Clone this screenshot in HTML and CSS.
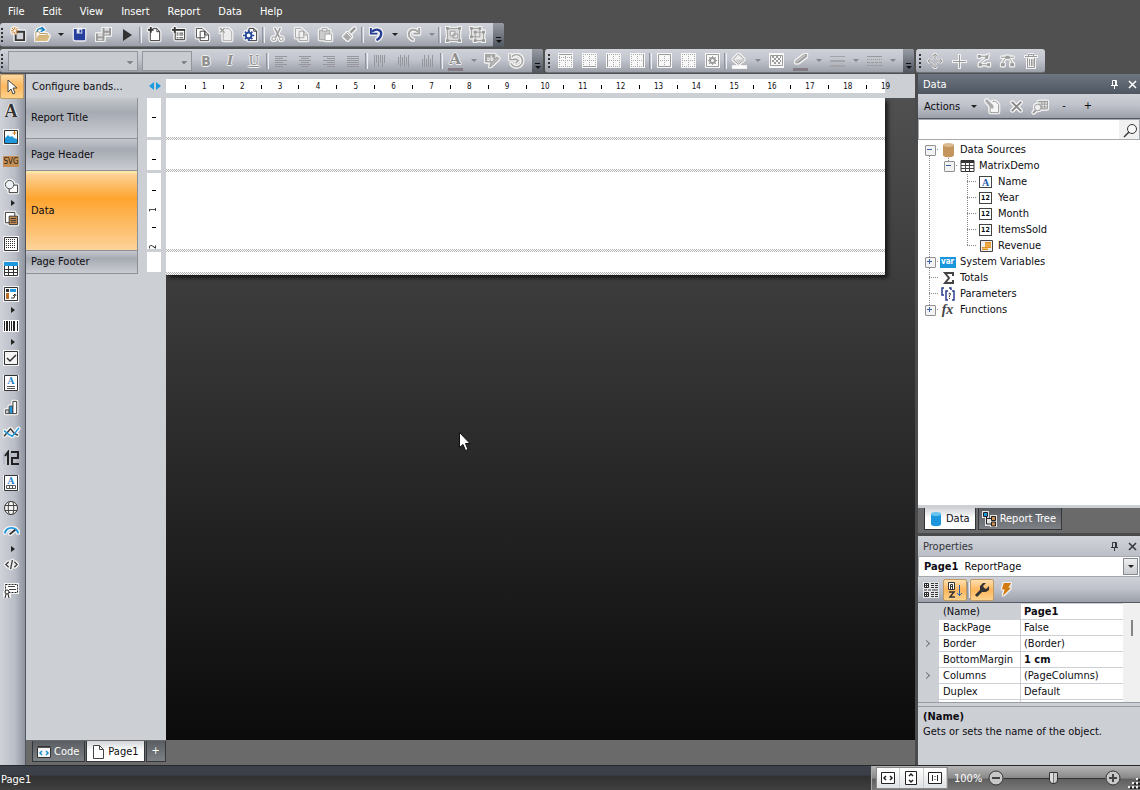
FILE: index.html
```html
<!DOCTYPE html>
<html lang="en">
<head>
<meta charset="utf-8">
<title>Report Designer</title>
<link rel="stylesheet" href="styles.css">
</head>
<body>
<div class="app">
  <nav class="menu">
    <button>File</button><button>Edit</button><button>View</button><button>Insert</button><button>Report</button><button>Data</button><button>Help</button>
  </nav>

  <div class="toolbar-row">
    <div class="toolbar first" role="toolbar" aria-label="Standard">
      <button class="tb" aria-label="New"><svg class="halo" viewBox="0 0 16 16"><path d="M6 5h8v9H5V8" fill="#d0d2d7" stroke="#333" stroke-width="2"/><path d="M4 0v8M0 4h8M1 1l6 6M7 1L1 7" stroke="#d07818" fill="none"/><circle cx="4" cy="4" r="1.3" fill="#fff"/></svg></button>
      <button class="tb" aria-label="Open"><svg class="halo" viewBox="0 0 16 16"><path d="M1 5h3l1 2h8v2H4l-3 6z" fill="#fff" stroke="#b99a60"/><path d="M4 9h12l-3 6H1z" fill="#d9ba7c"/><path d="M2 5c1-4 4-4 7-2M7 0l3 3-4 2" fill="none" stroke="#1781c4" stroke-width="1.5"/></svg></button>
      <button class="caret" aria-label="Open recent"></button>
      <button class="tb" aria-label="Save"><svg class="halo" viewBox="0 0 16 16"><path d="M2 2h12v12H3l-1-1z" fill="#263f9c"/><path d="M5 2h6v5H5z" fill="#dfe3ef"/><path d="M8 3h2v3H8z" fill="#263f9c"/></svg></button>
      <button class="tb" aria-label="Save all" disabled><svg class="halo" viewBox="0 0 16 16"><path d="M7 1h9v8H7zM0 7h9v8H0z" fill="#999"/><path d="M9 1h5v3H9zM2 7h5v3H2zM9 6h5v2H9zM2 12h5v2H2z" fill="#ddd"/></svg></button>
      <button class="tb" aria-label="Preview"><svg viewBox="0 0 16 16"><path d="M4 2l9 6-9 6z" fill="#333"/></svg></button>
      <span class="sep"></span>
      <button class="tb" aria-label="New page"><svg class="halo" viewBox="0 0 16 16"><path d="M3.500 6v8.500h10V5l-3-3.500H6" fill="#fff" stroke="#333"/><path d="M10.500 2v3h3" fill="none" stroke="#333"/><path d="M4 0v6M1 3h6" fill="none" stroke="#333" stroke-width="2"/></svg></button>
      <button class="tb" aria-label="New dialog"><svg class="halo" viewBox="0 0 16 16"><path d="M4.500 5v8.500h10V3H6" fill="#fff" stroke="#333"/><path d="M7 3h8M4 0v6M1 3h6" stroke="#333" stroke-width="2"/><path d="M6 6.500h2m1 0h4M6 8.500h2m1 0h4M6 11.500h2m1 0h4" stroke="#333"/></svg></button>
      <button class="tb" aria-label="Copy page"><svg class="halo" viewBox="0 0 16 16"><path d="M1.500 1.500h6l3 3v7h-9zM5.500 4.500h5l4 4v6h-9z" fill="#fff" stroke="#444"/><path d="M10.500 4.500v4h4" fill="none" stroke="#444"/></svg></button>
      <button class="tb" aria-label="Delete page" disabled><svg class="halo" viewBox="0 0 16 16"><path d="M4.500 5v9.500h9V5l-3-3.500H7" fill="#ececec" stroke="#aaa"/><path d="M1 1l5 5M6 1L1 6" stroke="#999" stroke-width="1.5"/></svg></button>
      <button class="tb" aria-label="Page settings"><svg class="halo" viewBox="0 0 16 16"><path d="M6.500 1.500h5l3 3v10h-8z" fill="#fff" stroke="#333"/><path d="M11.500 1.500v3h3" fill="none" stroke="#333"/><circle cx="6" cy="9" r="3" fill="#fff" stroke="#2a4a9e" stroke-width="2"/><path d="M6 3v3M6 12v3M0 9h3M9 9h3M2 5l2 2M8 11l2 2M10 5L8 7M4 11l-2 2" stroke="#2a4a9e" stroke-width="1.700"/></svg></button>
      <span class="sep"></span>
      <button class="tb" aria-label="Cut" disabled><svg class="halo" viewBox="0 0 16 16"><path d="M5 1l5 10M11 1L6 11" stroke="#999" stroke-width="1.500"/><circle cx="4" cy="12.500" r="2" fill="none" stroke="#999"/><circle cx="12" cy="12.500" r="2" fill="none" stroke="#999"/></svg></button>
      <button class="tb" aria-label="Copy" disabled><svg class="halo" viewBox="0 0 16 16"><path d="M1.500 1.500h6l3 3v7h-9zM5.500 4.500h5l4 4v6h-9z" fill="#f0f0f0" stroke="#a2a2a2"/><path d="M10.500 4.500v4h4" fill="none" stroke="#a2a2a2"/></svg></button>
      <button class="tb" aria-label="Paste" disabled><svg class="halo" viewBox="0 0 16 16"><path d="M1.500 3.500h11v10h-11z" fill="#ccc" stroke="#a2a2a2"/><path d="M4.500 1.500h5v3h-5z" fill="#eee" stroke="#a2a2a2"/><path d="M7.500 7.500h7v7h-7z" fill="#fff" stroke="#a2a2a2"/></svg></button>
      <button class="tb" aria-label="Format painter" disabled><svg class="halo" viewBox="0 0 16 16"><path d="M14 1l-5 5" stroke="#999" stroke-width="2.500"/><path d="M6 5l5 5-5 5-5-5z" fill="#aaa"/><path d="M5 6l5 5" stroke="#fff"/></svg></button>
      <span class="sep"></span>
      <button class="tb" aria-label="Undo"><svg class="halo" viewBox="0 0 16 16"><path d="M3 5c5-4 10-2 10 2 0 4-3 6-5 7" fill="none" stroke="#233e94" stroke-width="2.500"/><path d="M1 1h2v5h6v2H1z" fill="#233e94"/></svg></button>
      <button class="caret" aria-label="Undo list"></button>
      <button class="tb" aria-label="Redo" disabled><svg class="halo" viewBox="0 0 16 16"><path d="M13 5C8 1 3 3 3 8c0 3 3 5 5 6" fill="none" stroke="#a3a3a3" stroke-width="2"/><path d="M15 1h-2v5H8v2h7z" fill="#a3a3a3"/></svg></button>
      <button class="caret" aria-label="Redo list" disabled></button>
      <span class="sep"></span>
      <button class="tb" aria-label="Group" disabled><svg class="halo" viewBox="0 0 16 16"><path d="M1.500 1.500h13v13h-13z" fill="#d8d8da" stroke="#999"/><path d="M4.500 4.500h5v5h-5zM7.500 7.500h5v4h-5z" fill="#eee" stroke="#999"/><path d="M0 0h3v3H0zM13 0h3v3h-3zM0 13h3v3H0zM13 13h3v3h-3z" fill="#999"/></svg></button>
      <button class="tb" aria-label="Ungroup" disabled><svg class="halo" viewBox="0 0 16 16"><path d="M1.500 1.500h9v9h-9zM5.500 5.500h9v9h-9z" fill="#e4e4e4" stroke="#999"/><path d="M0 0h3v3H0zM9 0h3v3H9zM0 9h3v3H0zM4 4h3v3H4zM13 4h3v3h-3zM4 13h3v3H4zM13 13h3v3h-3z" fill="#999"/></svg></button>
      <button class="overflow" aria-label="More"></button>
    </div>
  </div>

  <div class="toolbar-row">
    <div class="toolbar first" role="toolbar" aria-label="Text">
      <select class="font-name" aria-label="Font" disabled><option></option></select>
      <select class="font-size" aria-label="Size" disabled><option></option></select>
      <button class="tb letter bold" disabled>B</button>
      <button class="tb letter italic" disabled>I</button>
      <button class="tb letter under" disabled>U</button>
      <span class="sep"></span>
      <button class="tb" aria-label="Left" disabled><svg viewBox="0 0 16 16"><path d="M2 3.500h12M2 5.500h8M2 7.500h12M2 9.500h8M2 11.500h12M2 13.500h8" stroke="#95979c"/></svg></button>
      <button class="tb" aria-label="Center" disabled><svg viewBox="0 0 16 16"><path d="M2 3.500h12M4 5.500h8M2 7.500h12M4 9.500h8M2 11.500h12M4 13.500h8" stroke="#95979c"/></svg></button>
      <button class="tb" aria-label="Right" disabled><svg viewBox="0 0 16 16"><path d="M2 3.500h12M6 5.500h8M2 7.500h12M6 9.500h8M2 11.500h12M6 13.500h8" stroke="#95979c"/></svg></button>
      <button class="tb" aria-label="Justify" disabled><svg viewBox="0 0 16 16"><path d="M2 3.500h12M2 5.500h12M2 7.500h12M2 9.500h12M2 11.500h12M2 13.500h12" stroke="#95979c"/></svg></button>
      <span class="sep"></span>
      <button class="tb" aria-label="Top" disabled><svg viewBox="0 0 16 16"><path d="M2.500 2v12M4.500 2v8M6.500 2v12M8.500 2v8M10.500 2v12M12.500 2v8" stroke="#95979c"/></svg></button>
      <button class="tb" aria-label="Middle" disabled><svg viewBox="0 0 16 16"><path d="M2.500 4v8M4.500 2v12M6.500 4v8M8.500 2v12M10.500 4v8M12.500 2v12" stroke="#95979c"/></svg></button>
      <button class="tb" aria-label="Bottom" disabled><svg viewBox="0 0 16 16"><path d="M2.500 6v8M4.500 2v12M6.500 6v8M8.500 2v12M10.500 6v8M12.500 2v12" stroke="#95979c"/></svg></button>
      <span class="sep"></span>
      <button class="tb letter color" disabled>A</button>
      <button class="caret" aria-label="Text colors" disabled></button>
      <button class="tb" aria-label="Highlight" disabled><svg class="halo" viewBox="0 0 16 16"><path d="M0 1h11v9H0z" fill="#a5a5a5"/><path d="M2 5.500h2.500V8H2.500V7M6.500 2.500V8h2V5.500h-2" fill="none" stroke="#fff"/><path d="M15 6l-7 7-3 2 1-4 7-7z" fill="#bbb" stroke="#999"/></svg></button>
      <button class="tb" aria-label="Rotation" disabled><svg class="halo" viewBox="0 0 16 16"><path d="M3 4a6.500 6.500 0 1 1-1 7" fill="none" stroke="#a2a2a2" stroke-width="1.500"/><path d="M1 1v6h6M6 6l4 2-3 3" fill="none" stroke="#a2a2a2" stroke-width="1.500"/></svg></button>
      <button class="overflow" aria-label="More"></button>
    </div>
    <div class="toolbar" role="toolbar" aria-label="Border and fill">
      <button class="tb" aria-label="Top line" disabled><svg class="cells" viewBox="0 0 15 15"><path class="d" d="M1 4.500h14M1 7.500h14M1 13.500h14M1.500 3v12M7.500 3v12M13.500 3v12"/><path d="M1 1.500h13"/></svg></button>
      <button class="tb" aria-label="Bottom line" disabled><svg class="cells" viewBox="0 0 15 15"><path class="d" d="M1 1.500h14M1 7.500h14M1.500 1v12M7.500 1v12M13.500 1v12"/><path d="M1 13.500h13"/></svg></button>
      <button class="tb" aria-label="Left line" disabled><svg class="cells" viewBox="0 0 15 15"><path class="d" d="M3 1.500h12M3 7.500h12M3 13.500h12M7.500 1v14M13.500 1v14"/><path d="M1.500 1v13"/></svg></button>
      <button class="tb" aria-label="Right line" disabled><svg class="cells" viewBox="0 0 15 15"><path class="d" d="M1 1.500h12M1 7.500h12M1 13.500h12M7.500 1v14M1.500 1v14"/><path d="M13.500 1v13"/></svg></button>
      <span class="sep"></span>
      <button class="tb" aria-label="All lines" disabled><svg class="cells" viewBox="0 0 15 15"><path class="d" d="M3 7.500h10M7.500 3v10"/><path d="M1.500 1.500h12v12h-12z"/></svg></button>
      <button class="tb" aria-label="No lines" disabled><svg class="cells" viewBox="0 0 15 15"><path class="d" d="M1 1.500h14M1 7.500h14M1 13.500h14M1.500 1v14M7.500 1v14M13.500 1v14"/></svg></button>
      <button class="tb" aria-label="Border editor" disabled><svg class="cells" viewBox="0 0 15 15"><path d="M1.500 1.500h12v12h-12z"/><circle cx="7.500" cy="7.500" r="2.500" stroke-width="2"/><path d="M7.500 3v2M7.500 10v2M3 7.500h2M10 7.500h2M4 4l2 2M9 9l2 2M11 4L9 6M6 9l-2 2"/></svg></button>
      <span class="sep"></span>
      <button class="tb" aria-label="Fill" disabled><svg class="halo" viewBox="0 0 16 16"><path d="M7 1l6 6-6 5-6-5z" fill="#eee" stroke="#999"/><path d="M3 7h9l-5 4z" fill="#ccc"/><path d="M1 14h14v2H1z" fill="#fff"/></svg></button>
      <button class="caret" aria-label="Fill colors" disabled></button>
      <button class="tb" aria-label="Fill style" disabled><svg class="cells" viewBox="0 0 15 15"><path d="M1.500 2.500h12v10h-12z"/><path class="d2" d="M3 4h9M5 6h8M3 8h9M5 10h8"/></svg></button>
      <button class="tb" aria-label="Line color" disabled><svg class="halo" viewBox="0 0 16 16"><path d="M15 1v3l-9 7H2l1-3 9-7z" fill="#a3a3a3"/><path d="M4 9l9-7" stroke="#ddd"/></svg><span class="swatch"></span></button>
      <button class="caret" aria-label="Line colors" disabled></button>
      <button class="tb" aria-label="Line width" disabled><svg viewBox="0 0 16 16"><path d="M1 3.500h15" stroke="#a3a4a8"/><path d="M1 8h15M1 13h15" stroke="#a3a4a8" stroke-width="2"/></svg></button>
      <button class="caret" aria-label="Line widths" disabled></button>
      <button class="tb" aria-label="Line style" disabled><svg viewBox="0 0 16 16"><path d="M1 3.500h15" stroke="#999"/><path d="M1 6.500h15" stroke="#999" stroke-dasharray="1 1"/><path d="M1 9.500h15M1 12.500h15" stroke="#999" stroke-dasharray="3 1"/></svg></button>
      <button class="caret" aria-label="Line styles" disabled></button>
      <button class="overflow" aria-label="More"></button>
    </div>
    <div class="toolbar last" role="toolbar" aria-label="Polygon">
      <button class="tb" aria-label="Move" disabled><svg viewBox="0 0 16 16"><g id="arrows" fill="none" stroke="#e4e4e4" stroke-width="3"><path d="M8 2v4M8 10v4M2 8h4M10 8h4M6 3l2-2 2 2M6 13l2 2 2-2M3 6L1 8l2 2M13 6l2 2-2 2"/></g><path d="M8 1v5M8 10v5M1 8h5M10 8h5M6 3l2-2 2 2M6 13l2 2 2-2M3 6L1 8l2 2M13 6l2 2-2 2" fill="none" stroke="#999"/></svg></button>
      <button class="tb" aria-label="Add point" disabled><svg viewBox="0 0 16 16"><path d="M8.500 1v15M1 8.500h15" stroke="#f2f2f2" stroke-width="3"/><path d="M8.500 2v13M2 8.500h13" stroke="#999"/></svg></button>
      <button class="tb" aria-label="Line" disabled><svg class="halo" viewBox="0 0 16 16"><path d="M3 3.500h8l3-2M4 11l7-6M5 12.500h8" fill="none" stroke="#999"/><path d="M2 2h3v3H2zM10 3h3v3h-3zM3 11h3v3H3zM12 11h3v3h-3z" fill="#999"/></svg></button>
      <button class="tb" aria-label="Curve" disabled><svg class="halo" viewBox="0 0 16 16"><path d="M1 4.500h14M3 12c0-5 4-7 5-7s5 2 5 7" fill="none" stroke="#999"/><path d="M6 3h4v3H6zM1 11h4v3H1zM11 11h4v3h-4z" fill="#999"/></svg></button>
      <button class="tb" aria-label="Delete" disabled><svg viewBox="0 0 16 16"><path d="M1 2h4V0h6v2h4v3h-2v11H3V5H1z" fill="#f2f2f2"/><path d="M2 3.500h12M5.500 3V1.500h5V3M4.500 5v9.500h7V5M6.500 6v7M8.500 6v7M10 6v7" fill="none" stroke="#999"/></svg></button>
    </div>
  </div>

  <div class="main">
    <div class="rail" role="toolbar" aria-label="Objects">
      <button class="active" aria-label="Select"><svg viewBox="0 0 16 16"><path d="M4 1v12l3-3 2 5 2-1-2-5h4z" fill="#fff" stroke="#444"/></svg></button>
      <button class="serif">A</button>
      <button aria-label="Picture"><svg class="box" viewBox="0 0 16 16"><path d="M1.500 1.500h13v13h-13z" fill="#fff" stroke="#333"/><path d="M2 9l3-3 2 2 2-1 2 2 3 1v4H2z" fill="#1f97dc"/><path d="M11.500 2v4M9.500 4h4" stroke="#d07818"/></svg></button>
      <button class="svg-tag"><span>SVG</span></button>
      <button aria-label="Shape"><svg class="halo" viewBox="0 0 16 16"><path d="M5.500 6.500h9v8h-9z" fill="#fff" stroke="#333"/><circle cx="6" cy="6" r="4.500" fill="#eef1f5" stroke="#444"/></svg></button>
      <button class="more" aria-label="More shapes"></button>
      <button aria-label="Subreport"><svg class="halo" viewBox="0 0 16 16"><path d="M1.500 1.500h10v11h-10z" fill="#fff" stroke="#333"/><path d="M5.500 5.500h9v9h-9z" fill="#c98e50" stroke="#333"/><path d="M7 8h6M7 10h6M7 12h6" stroke="#333"/></svg></button>
      <button aria-label="Table"><svg class="box" viewBox="0 0 16 16"><path d="M1.500 1.500h13v13h-13z" fill="#fff" stroke="#333"/><path d="M3 3.500h10M3 5.500h10M3 7.500h10M3 9.500h10M3 11.500h10" stroke="#333" stroke-dasharray="1 1"/></svg></button>
      <button aria-label="Matrix"><svg class="box" viewBox="0 0 16 16"><path d="M1.500 3.500h13v11h-13z" fill="#fff" stroke="#333"/><path d="M1 1h14v4H1z" fill="#1f97dc"/><path d="M1 8.500h14M1 11.500h14M5.500 5v10M10.500 5v10" stroke="#333"/></svg></button>
      <button aria-label="Advanced matrix"><svg class="box" viewBox="0 0 16 16"><path d="M1.500 1.500h13v13h-13z" fill="#fff" stroke="#333"/><path d="M3 3h3v3H3z" fill="#333"/><path d="M7 3h6v3H7z" fill="#1f97dc"/><path d="M3 7h3v6H3z" fill="#b86f24"/><path d="M8 12h3l1-3M10 10l2-2 1 2" fill="none" stroke="#333"/></svg></button>
      <button class="more" aria-label="More matrices"></button>
      <button aria-label="Barcode"><svg viewBox="0 0 16 16"><path d="M0 2h16v12H0z" fill="#fff"/><path d="M1.500 3v10M6.500 3v10M8.500 3v10M14.500 3v10" stroke="#222"/><path d="M4 3v10M11 3v10" stroke="#222" stroke-width="2"/></svg></button>
      <button class="more" aria-label="More barcodes"></button>
      <button aria-label="Check box"><svg class="box" viewBox="0 0 16 16"><path d="M1.500 1.500h13v13h-13z" fill="#f4f4f4" stroke="#333"/><path d="M4 8l3 3 6-6" fill="none" stroke="#333" stroke-width="1.500"/></svg></button>
      <button aria-label="Rich text"><svg class="box" viewBox="0 0 16 16"><path d="M1.500 .500h13v15h-13z" fill="#fff" stroke="#333"/><path d="M4 11.500h8M4 13.500h8" stroke="#555"/><text x="8" y="9" text-anchor="middle" class="blue-a">A</text></svg></button>
      <button aria-label="Chart"><svg class="halo" viewBox="0 0 16 16"><path d="M1.500 10.500h4v4h-4z" fill="#ccc" stroke="#444"/><path d="M5.500 6.500h4v8h-4z" fill="#1f97dc" stroke="#444"/><path d="M9.500 1.500h4v13h-4z" fill="#fff" stroke="#333"/></svg></button>
      <button aria-label="Sparkline"><svg class="halo" viewBox="0 0 16 16"><path d="M0 12l7-8 4 5 4 2" fill="none" stroke="#333" stroke-width="1.500"/><path d="M0 6l5 4 4 2 7-9" fill="none" stroke="#1f97dc" stroke-width="1.500"/></svg></button>
      <button class="digits" aria-label="Digits"><svg viewBox="0 0 16 16"><path d="M1 2v12M8 3v5M15 9v5" stroke="#a8adb8" fill="none"/><path d="M2 6l3-4v13M8 2h7v6H9v6h7" fill="none" stroke="#222" stroke-width="2"/></svg></button>
      <button aria-label="Cellular text"><svg class="box" viewBox="0 0 16 16"><path d="M1.500 .500h13v15h-13z" fill="#fff" stroke="#333"/><path d="M3.500 10.500h9v3h-9zM6.500 10v4M9.500 10v4" fill="none" stroke="#555"/><text x="8" y="9" text-anchor="middle" class="blue-a">A</text></svg></button>
      <button aria-label="Map"><svg viewBox="0 0 16 16"><circle cx="8" cy="8" r="6.500" fill="#f5f5f5" stroke="#333"/><path d="M2 5.500h12M2 10.500h12M6 2c-1 4-1 8 0 12M10 2c1 4 1 8 0 12" fill="none" stroke="#444"/></svg></button>
      <button aria-label="Gauge"><svg class="halo" viewBox="0 0 16 16"><path d="M1 9a7 6 0 0 1 14 0" fill="none" stroke="#1f97dc" stroke-width="2"/><path d="M6 10l6-5" stroke="#333" stroke-width="2"/></svg></button>
      <button class="more" aria-label="More gauges"></button>
      <button aria-label="HTML"><svg class="halo" viewBox="0 0 16 16"><path d="M5 5L2 8l3 3M11 5l3 3-3 3M9 3L7 13" fill="none" stroke="#444" stroke-width="1.500"/></svg></button>
      <button aria-label="Signature"><svg viewBox="0 0 16 16"><path d="M1 1h15v11H8v4H0V9h1z" fill="#f4f4f4"/><path d="M2.500 2.500h12v8h-12z" fill="#fff" stroke="#222" stroke-dasharray="2 1"/><path d="M5 4.500h7M6 7.500h7" stroke="#444"/><circle cx="4" cy="10" r="2" fill="#fff" stroke="#222"/><path d="M3 12l-1 4M5 12l1 4" stroke="#222"/></svg></button>
    </div>

    <div class="designer">
      <div class="ruler-row">
        <button class="configure">Configure bands...</button>
        <svg class="split-arrows" viewBox="0 0 12 8"><path d="M5 0v8L0 4zM7 0v8l5-4z" fill="#1a9be0"/></svg>
        <div class="h-ruler"><div class="marks">
          <i></i><b>1</b><i></i><b>2</b><i></i><b>3</b><i></i><b>4</b><i></i><b>5</b><i></i><b>6</b><i></i><b>7</b><i></i><b>8</b><i></i><b>9</b><i></i><b>10</b><i></i><b>11</b><i></i><b>12</b><i></i><b>13</b><i></i><b>14</b><i></i><b>15</b><i></i><b>16</b><i></i><b>17</b><i></i><b>18</b><i></i><b>19</b>
        </div></div>
      </div>
      <div class="work">
        <div class="bands">
          <button class="band title">Report Title</button>
          <button class="band header">Page Header</button>
          <button class="band data">Data</button>
          <button class="band footer">Page Footer</button>
        </div>
        <div class="v-ruler">
          <div class="seg title"><i></i></div>
          <div class="seg header"><i></i></div>
          <div class="seg data"><i></i><b>1</b><i></i><b>2</b></div>
          <div class="seg footer"></div>
        </div>
        <div class="canvas">
          <div class="paper">
            <div class="strip title"></div><div class="strip header"></div><div class="strip data"></div><div class="strip footer"></div>
          </div>
          <svg class="pointer" viewBox="0 0 12 19"><path d="M.500 .500v15l3.500-3 2.500 6 2.500-1-2.500-6H11z" fill="#fff" stroke="#111"/></svg>
        </div>
      </div>
      <div class="page-tabs">
        <button class="tab"><svg viewBox="0 0 16 16"><path d="M1.500 2.500h13v11h-13z" fill="#f4f4f4" stroke="#333"/><path d="M1 3.500h14" stroke="#555"/><path d="M6 7L4 9l2 2M10 7l2 2-2 2" fill="none" stroke="#1a8fd0" stroke-width="1.500"/></svg>Code</button>
        <button class="tab current"><svg viewBox="0 0 16 16"><path d="M3.500 1.500h6l4 4v9h-10z" fill="#fff" stroke="#444"/><path d="M9.500 1.500v4h4" fill="none" stroke="#444"/></svg>Page1</button>
        <button class="tab add">+</button>
      </div>
    </div>

    <aside class="side">
      <section class="data-panel">
        <header class="caption dark"><span>Data</span>
          <button aria-label="Pin"><svg viewBox="0 0 9 9"><path d="M2.500 5V.500h4V5M5.500 1v4M1 5.500h7M4.500 6v3" fill="none" stroke="currentColor"/></svg></button>
          <button aria-label="Close"><svg viewBox="0 0 9 9"><path d="M1 1l7 7M8 1L1 8" stroke="currentColor" stroke-width="1.500"/></svg></button>
        </header>
        <div class="panel-tools">
          <button class="actions">Actions</button><button class="caret" aria-label="Actions list"></button>
          <button class="tb" aria-label="Edit" disabled><svg class="halo" viewBox="0 0 16 16"><path d="M5.500 5v9.500h9V6l-3-3.500H8" fill="#f6f6f6" stroke="#999"/><path d="M0 2l2-2 7 7v3H7z" fill="#aaa"/></svg></button>
          <button class="tb" aria-label="Delete" disabled><svg class="halo" viewBox="0 0 16 16"><path d="M3 3l10 10M13 3L3 13" stroke="#888" stroke-width="2"/></svg></button>
          <button class="tb" aria-label="View data" disabled><svg class="halo" viewBox="0 0 16 16"><path d="M5.500 2.500h10v8H8" fill="#eee" stroke="#999"/><path d="M5 3h11M6 5.500h10M8 8.500h8M9.500 3v8M12.500 3v8" stroke="#999"/><circle cx="5" cy="9" r="3.500" fill="#eee" stroke="#999"/><path d="M3 12l-3 3" stroke="#999" stroke-width="2"/></svg></button>
          <button class="tb">-</button><button class="tb">+</button>
        </div>
        <div class="search"><input type="text" aria-label="Search"><button aria-label="Find"><svg viewBox="0 0 16 16"><circle cx="10" cy="6" r="4.500" fill="#f8f8f8" stroke="#333"/><path d="M7 9l-5 5" stroke="#333" stroke-width="1.500"/></svg></button></div>
        <div class="tree" role="tree">
          <div class="row"><span class="g open first-row"></span><span class="ic"><svg viewBox="0 0 16 16"><path d="M3 3v10c0 3 11 3 11 0V3z" fill="#c4955d"/><ellipse cx="8.500" cy="3" rx="5.500" ry="2" fill="#dab98e"/></svg></span><span>Data Sources</span></div>
          <div class="row"><span class="g v"></span><span class="g open single"></span><span class="ic"><svg viewBox="0 0 16 16"><path d="M2 2.500h13v11H2z" fill="#fff" stroke="#333"/><path d="M2 3.500h13" stroke="#333" stroke-width="3"/><path d="M2 7.500h13M2 10.500h13M6.500 4v9M10.500 4v9" stroke="#444"/></svg></span><span>MatrixDemo</span></div>
          <div class="row"><span class="g v"></span><span class="g"></span><span class="g t"></span><span class="ic"><span class="type letter-a">A</span></span><span>Name</span></div>
          <div class="row"><span class="g v"></span><span class="g"></span><span class="g t"></span><span class="ic"><span class="type">12</span></span><span>Year</span></div>
          <div class="row"><span class="g v"></span><span class="g"></span><span class="g t"></span><span class="ic"><span class="type">12</span></span><span>Month</span></div>
          <div class="row"><span class="g v"></span><span class="g"></span><span class="g t"></span><span class="ic"><span class="type">12</span></span><span>ItemsSold</span></div>
          <div class="row"><span class="g v"></span><span class="g"></span><span class="g l"></span><span class="ic"><svg viewBox="0 0 16 16"><path d="M2.500 2.500h12v11h-12z" fill="#eee" stroke="#444"/><path d="M7 4h6v6h-3v2H4V9h3z" fill="#e08f20"/><path d="M7 6h6M7 8h6M4 10.500h6" stroke="#f5c26b"/></svg></span><span>Revenue</span></div>
          <div class="row"><span class="g closed"></span><span class="ic"><span class="var">var</span></span><span>System Variables</span></div>
          <div class="row"><span class="g t"></span><span class="ic"><svg viewBox="0 0 16 16"><path d="M13 6V3H5l4 5-4 5h8v-3" fill="none" stroke="#444" stroke-width="2"/></svg></span><span>Totals</span></div>
          <div class="row"><span class="g t"></span><span class="ic"><svg viewBox="0 0 16 16"><path d="M4 2H2v7h2M8 5H6v9h2M9 2h2v2M12 5h2v9h-2" fill="none" stroke="#2a3f8f" stroke-width="1.500"/><path d="M8.500 8q2-2 2 0l-1 2v1M9.500 12v1" fill="none" stroke="#444"/></svg></span><span>Parameters</span></div>
          <div class="row"><span class="g closed last-row"></span><span class="ic fx">fx</span><span>Functions</span></div>
        </div>
        <div class="side-tabs">
          <button class="tab current"><svg viewBox="0 0 16 16"><path d="M3 3v10c0 3 10 3 10 0V3z" fill="#1a96dc"/><ellipse cx="8" cy="3" rx="5" ry="2" fill="#66c0f0"/></svg>Data</button>
          <button class="tab"><svg viewBox="0 0 16 16"><path d="M0 0h7v7h1V4h7v12H8v-1H3V7H0z" fill="#e4e4e4"/><path d="M4.500 5v8H9M4.500 7.500H9" fill="none" stroke="#222"/><path d="M1.500 1.500h4v4h-4z" fill="#1a96dc" stroke="#222"/><path d="M9.500 5.500h4v4h-4zM9.500 11h4v4h-4z" fill="#c98e50" stroke="#222"/></svg>Report Tree</button>
        </div>
      </section>

      <section class="props-panel">
        <header class="caption light"><span>Properties</span>
          <button aria-label="Pin"><svg viewBox="0 0 9 9"><path d="M2.500 5V.500h4V5M5.500 1v4M1 5.500h7M4.500 6v3" fill="none" stroke="currentColor"/></svg></button>
          <button aria-label="Close"><svg viewBox="0 0 9 9"><path d="M1 1l7 7M8 1L1 8" stroke="currentColor" stroke-width="1.500"/></svg></button>
        </header>
        <button class="object-picker"><span><strong>Page1</strong>&nbsp; ReportPage</span><span class="drop"></span></button>
        <div class="panel-tools props-tools">
          <button class="tb" aria-label="Categorized"><svg viewBox="0 0 16 16"><path d="M0 0h16v16H0z" fill="#e6e8ec"/><path d="M1.500 1.500h4v4h-4zM1.500 10.500h4v4h-4z" fill="#fff" stroke="#222"/><path d="M2 3.500h3M2 12.500h3M3.500 2v3M3.500 11v3M8 1.500h3m1 0h3M8 3.500h3m1 0h3M8 5.500h3m1 0h3M1 8h3m1 0h3m1 0h6M8 10.500h3m1 0h3M8 12.500h3m1 0h3M8 14.500h3m1 0h3" stroke="#333"/></svg></button>
          <button class="tb on" aria-label="Alphabetical"><svg viewBox="0 0 16 16"><path d="M1.500 .500h6v7h-6z" fill="#fff" stroke="#333"/><path d="M3.500 7V2.500h2V7M3 4.500h3" fill="none" stroke="#333"/><path d="M2 10h5l-4 5h5" fill="none" stroke="#333" stroke-width="1.500"/><path d="M12.500 3v11M10 11l2.500 2.500L15 11" fill="none" stroke="#2a62b0"/></svg></button>
          <span class="sep"></span>
          <button class="tb on" aria-label="Properties"><svg viewBox="0 0 16 16"><path d="M2 14l8-8" stroke="#333" stroke-width="3"/><path d="M12 1L9 4l1 2 2 1 3-3v4l-3 2H8L6 8V4l3-3z" fill="#333"/></svg></button>
          <button class="tb" aria-label="Events"><svg class="halo" viewBox="0 0 16 16"><path d="M5 1h8l-3 5h3L4 15l2-7H3z" fill="#d37b12"/></svg></button>
        </div>
        <div class="grid-wrap">
          <table class="props">
            <tr class="selected"><td></td><th>(Name)</th><td><strong>Page1</strong></td></tr>
            <tr><td></td><th>BackPage</th><td>False</td></tr>
            <tr><td><span class="chev"></span></td><th>Border</th><td>(Border)</td></tr>
            <tr><td></td><th>BottomMargin</th><td><strong>1 cm</strong></td></tr>
            <tr><td><span class="chev"></span></td><th>Columns</th><td>(PageColumns)</td></tr>
            <tr><td></td><th>Duplex</th><td>Default</td></tr>
            <tr><td></td><th></th><td></td></tr>
          </table>
          <div class="scroll"><span></span></div>
        </div>
        <div class="hint"><strong>(Name)</strong><p>Gets or sets the name of the object.</p></div>
      </section>
    </aside>
  </div>

  <footer class="status">
    <span class="status-text">Page1</span>
    <div class="zoom-area">
      <div class="zoom-modes">
        <button aria-label="Page width"><svg viewBox="0 0 14 14"><path d="M.500 1.500h13v11H.500z" fill="#fff" stroke="#222"/><path d="M5 5L3 7l2 2M9 5l2 2-2 2" fill="none" stroke="#222" stroke-width="1.500"/></svg></button>
        <button aria-label="Whole page"><svg viewBox="0 0 14 14"><path d="M1.500 .500h11v13h-11z" fill="#fff" stroke="#222"/><path d="M5 5l2-2 2 2M5 9l2 2 2-2" fill="none" stroke="#222" stroke-width="1.500"/></svg></button>
        <button aria-label="Actual size"><svg viewBox="0 0 14 14"><path d="M.500 1.500h13v11H.500z" fill="#fff" stroke="#222"/><path d="M4.500 4v6M9.500 4v6M7 5v1M7 8v1" stroke="#222"/></svg></button>
      </div>
      <label for="zoom">100%</label>
      <button class="round" aria-label="Zoom out"><svg viewBox="0 0 16 16"><circle cx="8" cy="8" r="7" fill="#c8c8c8" stroke="#333"/><path d="M4 8h8" stroke="#444" stroke-width="2"/></svg></button>
      <input id="zoom" type="range" min="0" max="100" value="49">
      <button class="round" aria-label="Zoom in"><svg viewBox="0 0 16 16"><circle cx="8" cy="8" r="7" fill="#c8c8c8" stroke="#333"/><path d="M4 8h8M8 4v8" stroke="#444" stroke-width="2"/></svg></button>
      <svg class="size-grip" viewBox="0 0 12 12"><path d="M8 0h2v2H8zM4 4h2v2H4zM8 4h2v2H8zM0 8h2v2H0zM4 8h2v2H4zM8 8h2v2H8z" fill="#eee"/><path d="M10 1h2v2h-2zM6 5h2v2H6zM10 5h2v2h-2zM2 9h2v2H2zM6 9h2v2H6zM10 9h2v2h-2z" fill="#222"/></svg>
    </div>
  </footer>
</div>
</body>
</html>
```
FILE: styles.css
```css
* { box-sizing: border-box; }
body { margin: 0; font: 11px/16px "DejaVu Sans Condensed", "DejaVu Sans", sans-serif; color: #0d0d12; }
button { appearance: none; margin: 0; padding: 0; border: 0; background: none; font: inherit; color: inherit; }
svg { display: block; flex: none; width: 16px; height: 16px; }
.app { display: flex; flex-direction: column; height: 100vh; background: #505050; overflow: hidden; }
.halo { overflow: visible; filter: drop-shadow(1px 0 0 #f2f2f2) drop-shadow(-1px 0 0 #f2f2f2) drop-shadow(0 1px 0 #f2f2f2) drop-shadow(0 -1px 0 #f2f2f2); }
.tb .halo, .rail .halo { width: 15px; height: 15px; }
.box { background: #f2f2f2; }

.menu { display: flex; height: 23px; gap: 18px; padding-left: 8px; color: #fff; }

.toolbar-row { display: flex; gap: 2px; height: 24px; margin-bottom: 2px; }
.toolbar { display: flex; align-items: center; height: 24px; padding-left: 8px; border-radius: 3px; background: linear-gradient(#d0d2d9, #c2c5cd 45%, #9ca0a9); border-bottom: 1px solid #6b7079; position: relative; }
.toolbar.first { padding-left: 6px; }
.toolbar.last { padding: 0 2px 0 7px; }
.toolbar::before { content: ""; position: absolute; left: 3px; top: 5px; width: 2px; height: 14px; background: repeating-linear-gradient(#333 0 2px, transparent 2px 4px); }
.toolbar.first::before { left: 1px; }
.tb { display: flex; align-items: center; justify-content: center; flex: none; width: 24px; height: 22px; position: relative; }
.caret { flex: none; width: 13px; height: 22px; display: flex; align-items: center; justify-content: center; }
.caret::before { content: ""; border: 3px solid transparent; border-top-color: #222; border-bottom: 0; }
.caret:disabled::before { border-top-color: #85878c; }
.sep { flex: none; width: 3px; height: 16px; border-left: 1px solid #8f939b; border-right: 1px solid #eceef1; }
.overflow { width: 11px; height: 24px; margin-left: 4px; align-self: flex-start; border-radius: 0 3px 3px 0; background: linear-gradient(#969ba4, #50565f); display: flex; flex-direction: column; align-items: center; justify-content: flex-end; gap: 2px; padding-bottom: 4px; }
.overflow::before { content: ""; width: 5px; height: 1px; background: #111; }
.overflow::after { content: ""; border: 3px solid transparent; border-top-color: #111; border-bottom: 0; }
select { appearance: none; height: 20px; margin: 0; border: 1px solid #92959b; border-radius: 0; }
select:disabled { opacity: 1; }
.font-name, .font-size { background: linear-gradient(45deg, transparent 50%, #85878c 50%) calc(100% - 7px) 9px / 3px 3px no-repeat, linear-gradient(315deg, transparent 50%, #85878c 50%) calc(100% - 4px) 9px / 3px 3px no-repeat, #c8cbd0; }
.font-name { width: 130px; margin: 0 4px 0 2px; }
.font-size { width: 50px; margin-right: 2px; }
.letter { font: 13px "DejaVu Serif", serif; color: #8f8f8f; text-shadow: 1px 0 #eee, -1px 0 #eee, 0 1px #eee, 0 -1px #eee; }
.letter.bold { font: bold 14px "DejaVu Sans Condensed", sans-serif; }
.letter.italic { font-style: italic; font-weight: bold; }
.letter.under { text-decoration: underline; }
.letter.color { font-size: 15px; font-weight: bold; padding-bottom: 3px; }
.letter.color::after, .swatch { content: ""; position: absolute; left: 5px; bottom: 1px; width: 15px; height: 3px; background: #847c84; }
.cells { width: 15px; height: 15px; background: #f8f8f8; fill: none; stroke: #9b9b9b; stroke-width: 1px; }
.cells .d { stroke: #aaa; stroke-dasharray: 1 1; }
.cells .d2 { stroke-width: 2px; stroke-dasharray: 2 2; }

.main { display: flex; flex: 1; min-height: 0; margin-top: -1px; }
.rail { display: flex; flex-direction: column; flex: none; align-items: flex-start; width: 26px; border-right: 1px solid #50555e; background: linear-gradient(90deg, #d0d2d9, #b9bdc6 60%, #8e939e); }
.rail button { display: flex; align-items: center; justify-content: center; flex: none; width: 22px; height: 25px; }
.rail .more { height: 7px; }
.more::before { content: ""; border: 3px solid transparent; border-left: 4px solid #222; border-right: 0; margin-left: 3px; }
.rail .active { width: 24px; background: linear-gradient(#fbd9a5, #fdb65d 50%, #fcd28a); border: 1px solid #c09a62; border-radius: 2px; }
.rail .serif { font: bold 18px "Liberation Serif", serif; color: #333; text-shadow: 1px 0 #eee, -1px 0 #eee; }
.svg-tag span { width: 16px; background: #c38f57; font: 8px/11px "DejaVu Sans Condensed", sans-serif; color: #2a1c10; }
.blue-a { font: bold 9px "DejaVu Serif", serif; fill: #2a83c9; }

.designer { display: flex; flex-direction: column; flex: 1; min-width: 0; background: #cccfd4; }
.ruler-row { display: flex; align-items: center; height: 24px; }
.configure { width: 112px; padding: 1px 0 0 6px; text-align: left; }
.split-arrows { width: 12px; height: 8px; margin: 0 5px 0 11px; }
.h-ruler { width: 719px; height: 14px; background: #fff; font-size: 8px; line-height: 15px; }
.marks { display: flex; margin: 0 -10px 0 10px; }
.marks i, .marks b { flex: 1 1 0; display: flex; align-items: center; justify-content: center; font-weight: normal; }
.marks i::before { content: ""; width: 1px; height: 4px; background: #000; }
.work { display: flex; flex: 1; min-height: 0; }
.bands { width: 112px; }
.band { display: block; width: 100%; padding-left: 5px; text-align: left; border-right: 1px solid #8e9198; border-bottom: 1px solid #8e9198; background: linear-gradient(#c4c7cc, #a6aab2 35%, #cacdd2); }
.band.title { height: 41px; }
.band.header { height: 32px; }
.band.data { height: 80px; background: linear-gradient(#fbe7a8 0 2px, #fdd296 3px, #fea42f 35%, #fdd39a); }
.band.footer { height: 23px; }
.v-ruler { display: flex; flex-direction: column; gap: 3px; width: 14px; margin: 0 5px 0 9px; font-size: 8px; line-height: 8px; }
.seg { display: flex; flex-direction: column; align-items: center; justify-content: center; background: #fff; }
.seg.title { height: 39px; }
.seg.header { height: 30px; padding-top: 8px; }
.seg.data { height: 76px; justify-content: flex-end; gap: 15px; overflow: hidden; }
.seg.footer { height: 20px; }
.seg i { width: 4px; height: 1px; background: #000; }
.seg b { font-weight: normal; writing-mode: vertical-rl; transform: rotate(180deg); height: 6px; flex: none; }
.canvas { flex: 1; min-width: 0; background: linear-gradient(#505050, #0b0b0b); position: relative; }
.paper { width: 719px; box-shadow: 3px 3px 4px rgba(0, 0, 0, .65); clip-path: inset(0 -10px -10px 0); }
.strip { background: conic-gradient(#b4b4b4 25%, #fff 0 50%, #b4b4b4 0 75%, #fff 0) 0 100% / 2px 2px; padding-bottom: 3px; }
.strip::before { content: ""; display: block; height: 100%; background: #fff; }
.strip.title { height: 42px; }
.strip.header { height: 32px; }
.strip.data { height: 80px; }
.strip.footer { height: 23px; }
.pointer { position: absolute; left: 293px; top: 334px; width: 12px; height: 19px; }
.page-tabs { display: flex; gap: 1px; height: 25px; padding: 1px 0 0 6px; background: #6a6a6a; }
.tab { display: flex; align-items: center; gap: 2px; height: 21px; padding: 1px 5px 0 3px; color: #fff; border: 1px solid #33363b; border-top: 0; background: linear-gradient(#5a5d62, #7d8084); }
.tab.current { color: #0d0d12; background: linear-gradient(#d2d4d8, #fff 50%); }
.tab.add { padding: 0 5px; }

.side { display: flex; flex-direction: column; flex: none; width: 225px; padding-left: 3px; background: #4a4b4d; }
.data-panel { display: flex; flex-direction: column; flex: 1; min-height: 0; background: #6a6a6a; }
.caption { display: flex; align-items: center; gap: 9px; height: 20px; padding: 0 3px 0 5px; }
.caption span { flex: 1; padding-top: 1px; }
.caption svg { width: 9px; height: 9px; }
.caption.dark { color: #fff; background: linear-gradient(#6e7781, #4e5761); }
.caption.light { color: #33363c; background: linear-gradient(#d2d4da, #bbbec6); }
.panel-tools { display: flex; align-items: center; height: 25px; padding-left: 6px; background: linear-gradient(#cfd1d8, #c0c3cb 45%, #9ca0aa); border-bottom: 1px solid #555b65; }
.actions { width: 43px; padding-top: 1px; text-align: left; }
.search { display: flex; height: 21px; border: 1px solid #a6a9ae; background: #fff; }
.search input { flex: 1; min-width: 0; border: 0; padding: 0 4px; font: inherit; outline: 0; }
.search button { width: 20px; background: #f0f0f0; padding: 2px 0 0 3px; }
.tree { flex: 1; min-height: 0; padding: 2px 0 0 2px; background: #fff; overflow: hidden; }
.row { display: flex; height: 16px; line-height: 16px; }
.g { flex: none; width: 19px; height: 16px; position: relative; --y: repeating-linear-gradient(#888 0 1px, transparent 1px 2px); --x: repeating-linear-gradient(90deg, #888 0 1px, transparent 1px 2px); }
.g.v { background: var(--y) 9px 0 / 1px 16px no-repeat; }
.g.t { background: var(--y) 9px 0 / 1px 16px no-repeat, var(--x) 9px 7px / 10px 1px no-repeat; }
.g.l { background: var(--y) 9px 0 / 1px 8px no-repeat, var(--x) 9px 7px / 10px 1px no-repeat; }
.g.open, .g.closed { background: var(--y) 9px 0 / 1px 16px no-repeat, var(--x) 9px 7px / 10px 1px no-repeat; }
.g.first-row { background: var(--y) 9px 8px / 1px 8px no-repeat, var(--x) 9px 7px / 10px 1px no-repeat; }
.g.single, .g.last-row { background: var(--y) 9px 0 / 1px 8px no-repeat, var(--x) 9px 7px / 10px 1px no-repeat; }
.g.open::before, .g.closed::before { content: ""; position: absolute; left: 5px; top: 3px; width: 9px; height: 9px; border: 1px solid #919191; border-radius: 1px; background: linear-gradient(#3c62a8, #3c62a8) 1px 3px / 5px 1px no-repeat, #f3f3f3; }
.g.closed::before { background: linear-gradient(#3c62a8, #3c62a8) 1px 3px / 5px 1px no-repeat, linear-gradient(#3c62a8, #3c62a8) 3px 1px / 1px 5px no-repeat, #f3f3f3; }
.ic { display: flex; align-items: center; justify-content: center; flex: none; width: 17px; margin-right: 4px; }
.type { width: 13px; height: 12px; border: 1px solid #444; background: #fff; font: bold 7px/10px "DejaVu Sans Condensed", sans-serif; text-align: center; }
.type.letter-a { font: bold 10px/11px "Liberation Serif", serif; color: #1c5ba8; }
.var { width: 16px; height: 11px; background: #1a96dc; color: #fff; font: bold 8px/9px "DejaVu Sans Condensed", sans-serif; text-align: center; }
.fx { font: italic bold 14px/14px "Liberation Serif", serif; color: #444; }
.side-tabs { display: flex; gap: 2px; height: 28px; padding: 0 0 0 6px; border-top: 3px solid #cccfd4; }
.side-tabs .tab { height: 22px; }

.props-panel { margin-top: 3px; background: #cccfd4; padding-bottom: 1px; }
.object-picker { display: flex; align-items: center; justify-content: space-between; width: 100%; height: 21px; padding: 0 1px 0 5px; border: 1px solid #a6a9ae; background: #fff; text-align: left; white-space: nowrap; }
.drop { display: flex; align-items: center; justify-content: center; width: 15px; height: 17px; border: 1px solid #878a90; background: linear-gradient(#eee, #c8cbd0); }
.drop::before { content: ""; border: 3px solid transparent; border-top-color: #222; border-bottom: 0; }
.props-tools { padding-left: 1px; height: 26px; }
.tb.on { background: linear-gradient(#fde0b0, #fdb65d 50%, #fcd28a); border: 1px solid #c09a62; border-radius: 2px; }
.grid-wrap { display: flex; height: 100px; overflow: hidden; border-bottom: 1px solid #999ca2; }
.props { flex: 1; border-collapse: separate; border-spacing: 0; table-layout: fixed; width: 205px; height: 119px; background: #fff; }
.props td, .props th { height: 16px; padding: 1px 0 0 3px; line-height: 14px; font-weight: normal; text-align: left; border-bottom: 1px solid #cccfd4; white-space: nowrap; overflow: hidden; }
.props { height: auto; align-self: flex-start; margin-top: 1px; }
.props td:first-child { width: 21px; background: #cccfd4; padding: 0; }
.props th { width: 82px; padding-left: 4px; border-right: 1px solid #cccfd4; }
.props .selected th { background: #cccfd4; }
.chev { display: block; width: 5px; height: 5px; margin-left: 6px; border: solid #777; border-width: 1px 1px 0 0; transform: rotate(45deg); }
.scroll { width: 17px; background: #f0f0f0; padding: 17px 0 0 8px; }
.scroll span { display: block; width: 2px; height: 16px; background: #858585; }
.hint { height: 58px; margin-top: 3px; padding: 2px 5px; border-top: 1px solid #999ca2; line-height: 15px; }
.hint p { margin: 0; }

.status { display: flex; flex: none; height: 25px; border-top: 1px solid #25282c; background: linear-gradient(#3c4149 0 9px, #303030 10px, #404040); color: #fff; }
.status-text { flex: 1; padding: 6px 0 0 1px; }
.zoom-area { display: flex; align-items: center; width: 269px; padding-left: 4px; border-left: 1px solid #aaa; background: linear-gradient(#b5b5b5, #888 50%, #606060 55%, #777); }
.zoom-modes { display: flex; width: 72px; height: 22px; border: 1px solid #888; background: linear-gradient(#fff, #dfe2e5); }
.zoom-modes button { flex: 1; display: flex; align-items: center; justify-content: center; border-right: 1px solid #ccc; }
.zoom-modes svg { width: 14px; height: 14px; }
.zoom-area label { width: 33px; margin: 2px 1px 0 6px; }
.round { flex: none; }
#zoom { appearance: none; flex: 1; min-width: 0; height: 16px; margin: 0; background: linear-gradient(#333, #333) 0 8px / 100% 1px no-repeat; }
#zoom::-webkit-slider-thumb { appearance: none; width: 9px; height: 12px; border: 1px solid #333; border-radius: 1px 1px 4px 4px; background: linear-gradient(90deg, #ddd 3px, #777 3px 4px, #ccc 4px); }
.size-grip { width: 12px; height: 12px; margin: 12px 0 0 7px; }
```
